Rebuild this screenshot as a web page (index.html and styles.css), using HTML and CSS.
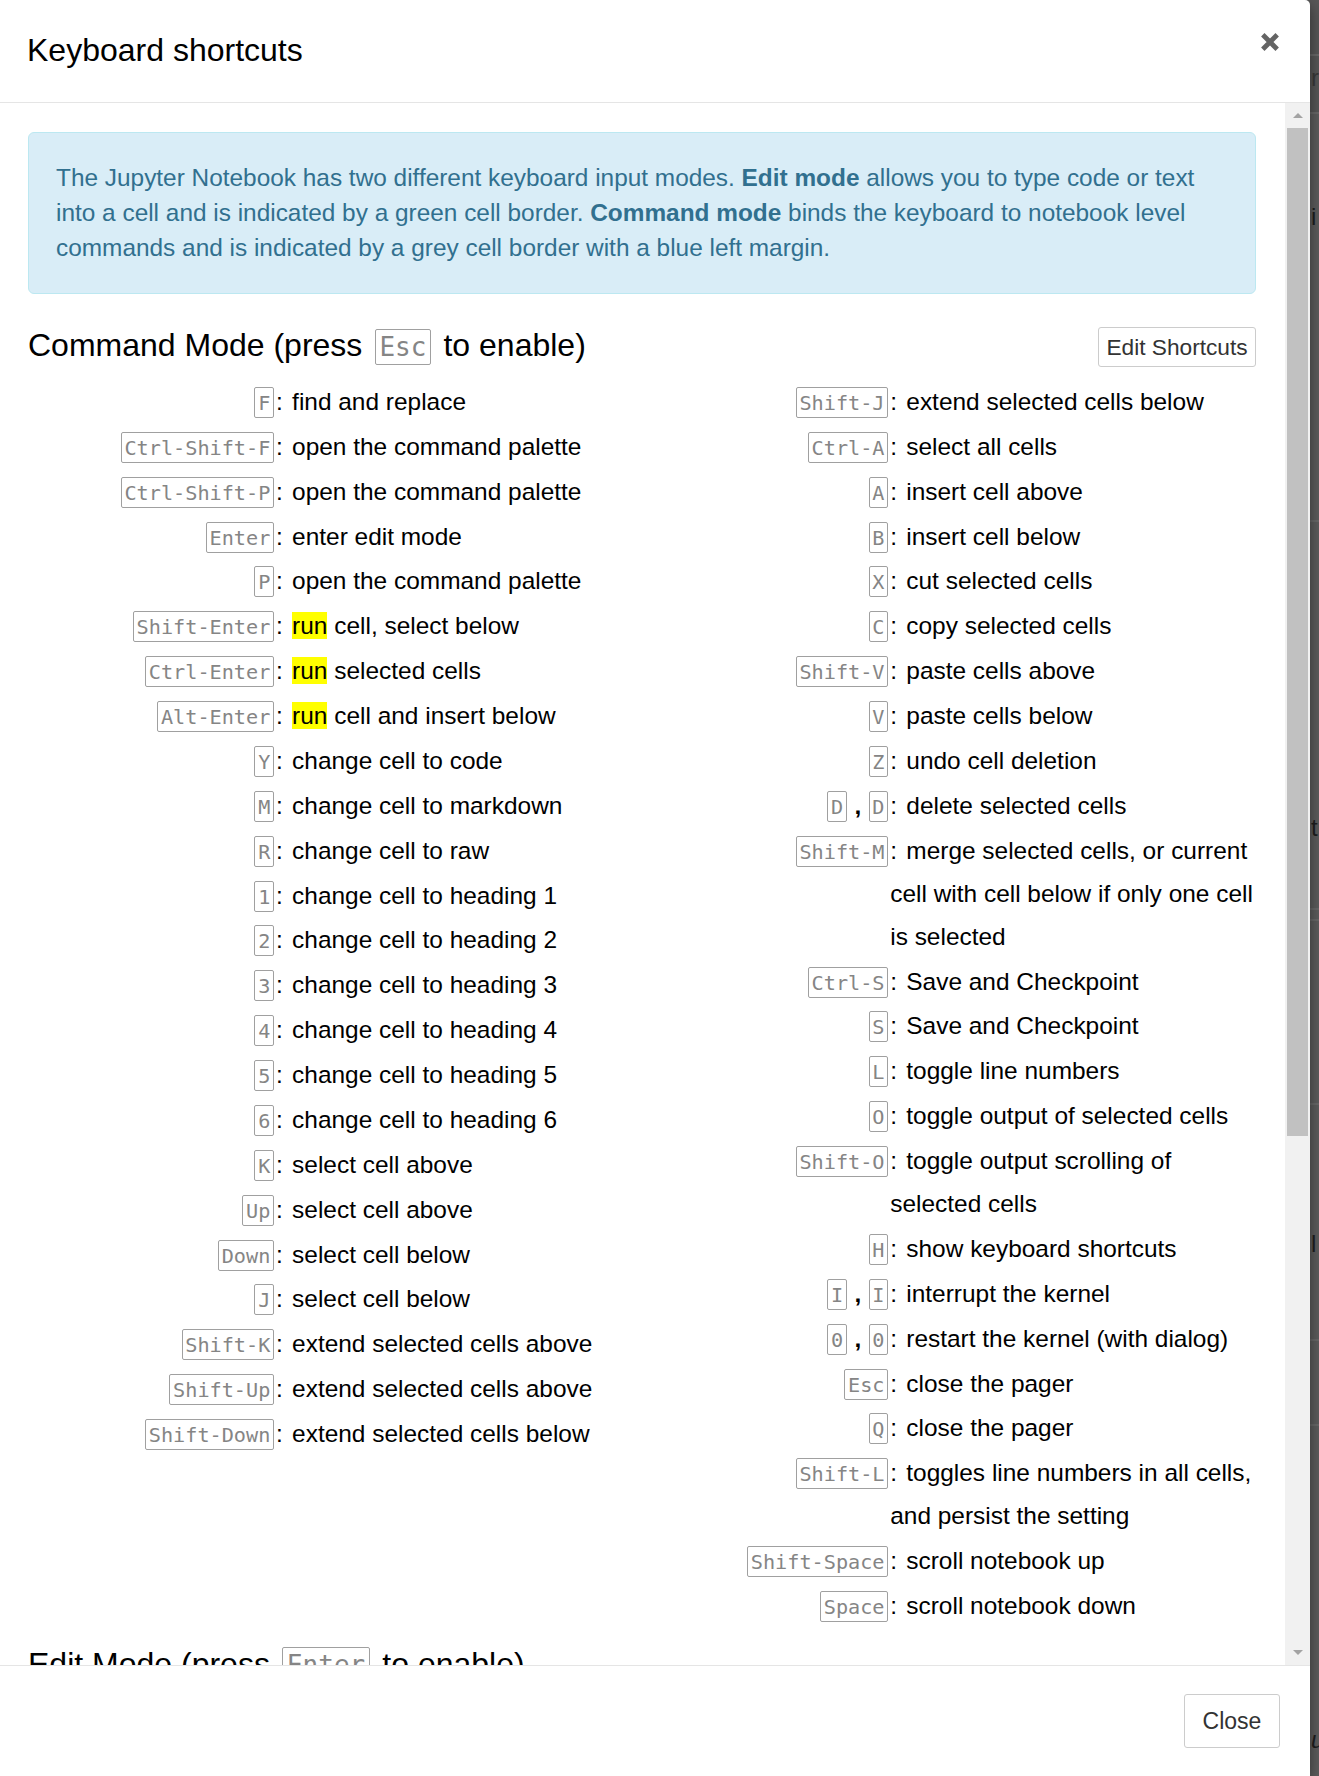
FILE: index.html
```html
<!DOCTYPE html>
<html lang="en">
<head>
<meta charset="utf-8">
<title>Keyboard shortcuts</title>
<link rel="stylesheet" href="styles.css">
</head>
<body>
<div class="modal">
  <div class="modal-header">
    <h4 class="modal-title">Keyboard shortcuts</h4>
    <button class="close" aria-label="Close">
      <svg width="18" height="18" viewBox="0 0 18 18"><path d="M1.8 1.8 L16.2 16.2 M16.2 1.8 L1.8 16.2" stroke="#646464" stroke-width="4.8" fill="none"/></svg>
    </button>
  </div>
  <div class="modal-body">
    <div class="content">
      <div class="alert">The Jupyter Notebook has two different keyboard input modes. <b>Edit mode</b> allows you to type code or text into a cell and is indicated by a green cell border. <b>Command mode</b> binds the keyboard to notebook level commands and is indicated by a grey cell border with a blue left margin.</div>

      <div class="section-head">
        <h4 class="section-title">Command Mode (press <kbd class="kbd">Esc</kbd> to enable)</h4>
        <button class="btn btn-xs">Edit Shortcuts</button>
      </div>

      <div class="columns">
        <div class="col">
          <div class="row"><span class="key"><kbd class="kbd">F</kbd></span><span class="descr"><span class="colon">:</span> find and replace</span></div>
          <div class="row"><span class="key"><kbd class="kbd">Ctrl-Shift-F</kbd></span><span class="descr"><span class="colon">:</span> open the command palette</span></div>
          <div class="row"><span class="key"><kbd class="kbd">Ctrl-Shift-P</kbd></span><span class="descr"><span class="colon">:</span> open the command palette</span></div>
          <div class="row"><span class="key"><kbd class="kbd">Enter</kbd></span><span class="descr"><span class="colon">:</span> enter edit mode</span></div>
          <div class="row"><span class="key"><kbd class="kbd">P</kbd></span><span class="descr"><span class="colon">:</span> open the command palette</span></div>
          <div class="row"><span class="key"><kbd class="kbd">Shift-Enter</kbd></span><span class="descr"><span class="colon">:</span> <span class="hl">run</span> cell, select below</span></div>
          <div class="row"><span class="key"><kbd class="kbd">Ctrl-Enter</kbd></span><span class="descr"><span class="colon">:</span> <span class="hl">run</span> selected cells</span></div>
          <div class="row"><span class="key"><kbd class="kbd">Alt-Enter</kbd></span><span class="descr"><span class="colon">:</span> <span class="hl">run</span> cell and insert below</span></div>
          <div class="row"><span class="key"><kbd class="kbd">Y</kbd></span><span class="descr"><span class="colon">:</span> change cell to code</span></div>
          <div class="row"><span class="key"><kbd class="kbd">M</kbd></span><span class="descr"><span class="colon">:</span> change cell to markdown</span></div>
          <div class="row"><span class="key"><kbd class="kbd">R</kbd></span><span class="descr"><span class="colon">:</span> change cell to raw</span></div>
          <div class="row"><span class="key"><kbd class="kbd">1</kbd></span><span class="descr"><span class="colon">:</span> change cell to heading 1</span></div>
          <div class="row"><span class="key"><kbd class="kbd">2</kbd></span><span class="descr"><span class="colon">:</span> change cell to heading 2</span></div>
          <div class="row"><span class="key"><kbd class="kbd">3</kbd></span><span class="descr"><span class="colon">:</span> change cell to heading 3</span></div>
          <div class="row"><span class="key"><kbd class="kbd">4</kbd></span><span class="descr"><span class="colon">:</span> change cell to heading 4</span></div>
          <div class="row"><span class="key"><kbd class="kbd">5</kbd></span><span class="descr"><span class="colon">:</span> change cell to heading 5</span></div>
          <div class="row"><span class="key"><kbd class="kbd">6</kbd></span><span class="descr"><span class="colon">:</span> change cell to heading 6</span></div>
          <div class="row"><span class="key"><kbd class="kbd">K</kbd></span><span class="descr"><span class="colon">:</span> select cell above</span></div>
          <div class="row"><span class="key"><kbd class="kbd">Up</kbd></span><span class="descr"><span class="colon">:</span> select cell above</span></div>
          <div class="row"><span class="key"><kbd class="kbd">Down</kbd></span><span class="descr"><span class="colon">:</span> select cell below</span></div>
          <div class="row"><span class="key"><kbd class="kbd">J</kbd></span><span class="descr"><span class="colon">:</span> select cell below</span></div>
          <div class="row"><span class="key"><kbd class="kbd">Shift-K</kbd></span><span class="descr"><span class="colon">:</span> extend selected cells above</span></div>
          <div class="row"><span class="key"><kbd class="kbd">Shift-Up</kbd></span><span class="descr"><span class="colon">:</span> extend selected cells above</span></div>
          <div class="row"><span class="key"><kbd class="kbd">Shift-Down</kbd></span><span class="descr"><span class="colon">:</span> extend selected cells below</span></div>
        </div>
        <div class="col">
          <div class="row"><span class="key"><kbd class="kbd">Shift-J</kbd></span><span class="descr"><span class="colon">:</span> extend selected cells below</span></div>
          <div class="row"><span class="key"><kbd class="kbd">Ctrl-A</kbd></span><span class="descr"><span class="colon">:</span> select all cells</span></div>
          <div class="row"><span class="key"><kbd class="kbd">A</kbd></span><span class="descr"><span class="colon">:</span> insert cell above</span></div>
          <div class="row"><span class="key"><kbd class="kbd">B</kbd></span><span class="descr"><span class="colon">:</span> insert cell below</span></div>
          <div class="row"><span class="key"><kbd class="kbd">X</kbd></span><span class="descr"><span class="colon">:</span> cut selected cells</span></div>
          <div class="row"><span class="key"><kbd class="kbd">C</kbd></span><span class="descr"><span class="colon">:</span> copy selected cells</span></div>
          <div class="row"><span class="key"><kbd class="kbd">Shift-V</kbd></span><span class="descr"><span class="colon">:</span> paste cells above</span></div>
          <div class="row"><span class="key"><kbd class="kbd">V</kbd></span><span class="descr"><span class="colon">:</span> paste cells below</span></div>
          <div class="row"><span class="key"><kbd class="kbd">Z</kbd></span><span class="descr"><span class="colon">:</span> undo cell deletion</span></div>
          <div class="row"><span class="key"><kbd class="kbd">D</kbd><span class="sep">,</span><kbd class="kbd">D</kbd></span><span class="descr"><span class="colon">:</span> delete selected cells</span></div>
          <div class="row"><span class="key"><kbd class="kbd">Shift-M</kbd></span><span class="descr"><span class="colon">:</span> merge selected cells, or current cell with cell below if only one cell is selected</span></div>
          <div class="row"><span class="key"><kbd class="kbd">Ctrl-S</kbd></span><span class="descr"><span class="colon">:</span> Save and Checkpoint</span></div>
          <div class="row"><span class="key"><kbd class="kbd">S</kbd></span><span class="descr"><span class="colon">:</span> Save and Checkpoint</span></div>
          <div class="row"><span class="key"><kbd class="kbd">L</kbd></span><span class="descr"><span class="colon">:</span> toggle line numbers</span></div>
          <div class="row"><span class="key"><kbd class="kbd">O</kbd></span><span class="descr"><span class="colon">:</span> toggle output of selected cells</span></div>
          <div class="row"><span class="key"><kbd class="kbd">Shift-O</kbd></span><span class="descr"><span class="colon">:</span> toggle output scrolling of selected cells</span></div>
          <div class="row"><span class="key"><kbd class="kbd">H</kbd></span><span class="descr"><span class="colon">:</span> show keyboard shortcuts</span></div>
          <div class="row"><span class="key"><kbd class="kbd">I</kbd><span class="sep">,</span><kbd class="kbd">I</kbd></span><span class="descr"><span class="colon">:</span> interrupt the kernel</span></div>
          <div class="row"><span class="key"><kbd class="kbd">0</kbd><span class="sep">,</span><kbd class="kbd">0</kbd></span><span class="descr"><span class="colon">:</span> restart the kernel (with dialog)</span></div>
          <div class="row"><span class="key"><kbd class="kbd">Esc</kbd></span><span class="descr"><span class="colon">:</span> close the pager</span></div>
          <div class="row"><span class="key"><kbd class="kbd">Q</kbd></span><span class="descr"><span class="colon">:</span> close the pager</span></div>
          <div class="row"><span class="key"><kbd class="kbd">Shift-L</kbd></span><span class="descr"><span class="colon">:</span> toggles line numbers in all cells, and persist the setting</span></div>
          <div class="row"><span class="key"><kbd class="kbd">Shift-Space</kbd></span><span class="descr"><span class="colon">:</span> scroll notebook up</span></div>
          <div class="row"><span class="key"><kbd class="kbd">Space</kbd></span><span class="descr"><span class="colon">:</span> scroll notebook down</span></div>
        </div>
      </div>

      <div class="section-head edit-head">
        <h4 class="section-title">Edit Mode (press <kbd class="kbd">Enter</kbd> to enable)</h4>
      </div>
      <div class="columns">
        <div class="col">
          <div class="row"><span class="key"><kbd class="kbd">Tab</kbd></span><span class="descr"><span class="colon">:</span> code completion or indent</span></div>
          <div class="row"><span class="key"><kbd class="kbd">Shift-Tab</kbd></span><span class="descr"><span class="colon">:</span> tooltip</span></div>
        </div>
        <div class="col">
          <div class="row"><span class="key"><kbd class="kbd">Ctrl-]</kbd></span><span class="descr"><span class="colon">:</span> indent</span></div>
          <div class="row"><span class="key"><kbd class="kbd">Ctrl-[</kbd></span><span class="descr"><span class="colon">:</span> dedent</span></div>
        </div>
      </div>
    </div>
    <div class="scrollbar" aria-hidden="true">
      <div class="sb-btn"><span class="arrow-up"></span></div>
      <div class="thumb"></div>
      <div class="sb-space"></div>
      <div class="sb-btn"><span class="arrow-down"></span></div>
    </div>
  </div>
  <div class="modal-footer">
    <button class="btn btn-close">Close</button>
  </div>
</div>
<div class="backdrop" aria-hidden="true">
  <span class="frag frag-r">r</span>
  <span class="frag frag-i">i</span>
  <span class="frag frag-t">t</span>
  <span class="frag frag-l">l</span>
  <span class="frag frag-u">u</span>
</div>
</body>
</html>
```

FILE: styles.css
```css
* { box-sizing: border-box; }

html, body {
  margin: 0;
  padding: 0;
}

body {
  width: 1319px;
  height: 1776px;
  overflow: hidden;
  display: flex;
  font-family: "Liberation Sans", Arial, Helvetica, sans-serif;
  color: #000;
  background: #5c5c5c;
}

/* ---------- modal ---------- */
.modal {
  width: 1310px;
  height: 1776px;
  flex: none;
  display: flex;
  flex-direction: column;
  background: #fff;
  border-top-right-radius: 5px;
  box-shadow: 0 5px 15px rgba(0, 0, 0, 0.5);
  position: relative;
  z-index: 1;
}

.modal-header {
  height: 103px;
  flex: none;
  border-bottom: 1px solid #e5e5e5;
  padding: 26px 30.7px 0 27px;
  display: flex;
  justify-content: space-between;
  align-items: flex-start;
}

.modal-title {
  margin: 0;
  font-size: 32px;
  line-height: 48px;
  font-weight: normal;
  color: #000;
}

.close {
  margin-top: 7.3px;
  padding: 0;
  border: 0;
  background: none;
  width: 18px;
  height: 18px;
  display: block;
}

.close svg { display: block; }

.modal-body {
  flex: 1;
  min-height: 0;
  display: flex;
}

.content {
  flex: 1;
  min-width: 0;
  overflow: hidden;
  padding: 28.7px 28.6px 0 28px;
}

/* ---------- scrollbar ---------- */
.scrollbar {
  width: 25px;
  flex: none;
  background: #f1f1f1;
  display: flex;
  flex-direction: column;
}

.sb-btn {
  height: 25px;
  flex: none;
  display: flex;
  align-items: center;
  justify-content: center;
}

.arrow-up {
  width: 0;
  height: 0;
  border-left: 5px solid transparent;
  border-right: 5px solid transparent;
  border-bottom: 5px solid #a3a3a3;
}

.arrow-down {
  width: 0;
  height: 0;
  border-left: 5px solid transparent;
  border-right: 5px solid transparent;
  border-top: 5px solid #a3a3a3;
}

.thumb {
  height: 1008px;
  flex: none;
  margin: 0 2.3px;
  background: #c1c1c1;
}

.sb-space { flex: 1; }

/* ---------- alert ---------- */
.alert {
  background: #d9edf7;
  border: 1px solid #bce8f1;
  border-radius: 6px;
  color: #31708f;
  padding: 27px;
  font-size: 24.4px;
  line-height: 35.3px;
}

.alert b { font-weight: bold; }

/* ---------- section headings ---------- */
.section-head {
  display: flex;
  justify-content: space-between;
  align-items: flex-start;
  margin-top: 31.4px;
}

.edit-head { margin-top: 15.6px; }

.section-title {
  margin: 0;
  font-size: 32px;
  line-height: 40px;
  font-weight: normal;
  color: #000;
}

.btn {
  font-family: "Liberation Sans", Arial, Helvetica, sans-serif;
  background: #fff;
  color: #333;
  border: 1px solid #ccc;
  border-radius: 3px;
  cursor: pointer;
}

.btn-xs {
  font-size: 22.7px;
  line-height: 32px;
  padding: 3px 7.8px;
  margin-top: 2px;
}

.btn-close {
  font-size: 23px;
  line-height: 26px;
  padding: 13px 17.6px;
}

/* ---------- shortcut lists ---------- */
.columns {
  display: grid;
  grid-template-columns: 1fr 1fr;
  margin-top: 12px;
}

.row {
  display: flex;
  align-items: baseline;
  padding: 0.95px 0;
  font-size: 24.45px;
  line-height: 43px;
  color: #000;
}

.key {
  width: 248px;
  flex: none;
  text-align: right;
  white-space: nowrap;
}

.descr {
  flex: 1;
  min-width: 0;
}

.colon { margin-right: 2.5px; }

.kbd {
  font-family: "DejaVu Sans Mono", "Liberation Mono", monospace;
  font-size: 20.2px;
  line-height: 20px;
  color: #858585;
  background: #fff;
  border: 1px solid #a0a0a0;
  border-radius: 2px;
  padding: 3px 2.7px 2px;
  margin: 0 2px;
}

.section-title .kbd {
  font-size: 26px;
  padding: 2.35px 3.7px;
  margin: 0 3.5px;
}

.sep {
  font-weight: bold;
  padding: 0 5.5px;
}

.hl { background: #ffff00; }

/* ---------- footer ---------- */
.modal-footer {
  height: 111px;
  flex: none;
  border-top: 1px solid #e5e5e5;
  padding: 28px 30px 0;
  display: flex;
  justify-content: flex-end;
  align-items: flex-start;
}

/* ---------- backdrop (page under overlay) ---------- */
.backdrop {
  flex: 1;
  position: relative;
  overflow: hidden;
  background:
    linear-gradient(to bottom,
      #585858 0, #585858 54px, #6a6a6a 54px, #6a6a6a 56px,
      #585858 56px, #585858 112px, #6a6a6a 112px, #6a6a6a 114px,
      #5e5e5e 114px, #5e5e5e 520px, #6a6a6a 520px, #6a6a6a 522px,
      #5e5e5e 522px, #5e5e5e 908px, #6a6a6a 908px, #6a6a6a 910px,
      #5e5e5e 910px, #5e5e5e 919px, #6a6a6a 919px, #6a6a6a 921px,
      #5e5e5e 921px, #5e5e5e 1103px, #6a6a6a 1103px, #6a6a6a 1105px,
      #5e5e5e 1105px, #5e5e5e 1339px, #6a6a6a 1339px, #6a6a6a 1341px,
      #5e5e5e 1341px, #5e5e5e 1424px, #6a6a6a 1424px, #6a6a6a 1426px,
      #5e5e5e 1426px, #5e5e5e 100%);
}

.frag {
  position: absolute;
  left: 1px;
  font-family: "Liberation Sans", Arial, sans-serif;
  font-size: 24px;
  line-height: 24px;
  color: #1e1e1e;
}

.frag-r { top: 66px; color: #3a3a3a; }
.frag-i { top: 205px; }
.frag-t { top: 816px; }
.frag-l { top: 1232px; }
.frag-u { top: 1728px; font-style: italic; }
```
